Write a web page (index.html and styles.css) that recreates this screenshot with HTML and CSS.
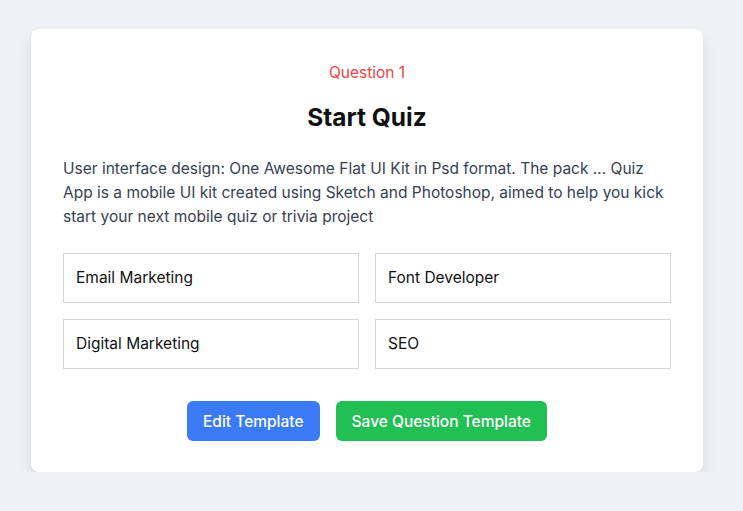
FILE: index.html
```html
<!DOCTYPE html>
<html>
<head>
<meta charset="utf-8">
<link rel="stylesheet" href="styles.css">
</head>
<body>
<div class="card">
  <div class="label">Question 1</div>
  <h1 class="title">Start Quiz</h1>
  <p class="desc">User interface design: One Awesome Flat UI Kit in Psd format. The pack … Quiz App is a mobile UI kit created using Sketch and Photoshop, aimed to help you kick start your next mobile quiz or trivia project</p>
  <div class="options">
    <div class="option">Email Marketing</div>
    <div class="option">Font Developer</div>
    <div class="option">Digital Marketing</div>
    <div class="option">SEO</div>
  </div>
  <div class="actions">
    <button class="btn btn-blue">Edit Template</button>
    <button class="btn btn-green">Save Question Template</button>
  </div>
</div>
</body>
</html>
```

FILE: styles.css
```css
html, body {
  margin: 0;
  background: #f0f1f5;
}
body {
  padding: 29px 0 0 31px;
  font-family: Inter, "Noto Sans", sans-serif;
  color: #111827;
}
.card {
  width: 672px;
  box-sizing: border-box;
  background: #fff;
  border-radius: 8px;
  padding: 32px 32px 31px;
  box-shadow: 0 8px 16px rgba(0,0,0,0.08), 0 1px 3px rgba(0,0,0,0.05);
}
.label {
  text-align: center;
  color: #ef4444;
  font-size: 15.5px;
  line-height: 24px;
}
.title {
  margin: 16px 0 0;
  text-align: center;
  font-size: 24.5px;
  line-height: 32px;
  font-weight: 700;
  color: #111;
}
.desc {
  margin: 24px 0 0;
  font-size: 15.5px;
  line-height: 24px;
  color: #374151;
}
.options {
  margin-top: 24px;
  display: grid;
  grid-template-columns: 1fr 1fr;
  gap: 16px;
}
.option {
  height: 50px;
  box-sizing: border-box;
  border: 1px solid #d1d5db;
  padding: 0 12px 1px;
  display: flex;
  align-items: center;
  font-size: 15.5px;
  color: #111;
}
.actions {
  margin-top: 32px;
  display: flex;
  justify-content: center;
  gap: 16px;
}
.btn {
  height: 40px;
  border: none;
  border-radius: 6px;
  padding: 0 16px;
  font-family: inherit;
  font-size: 15.5px;
  font-weight: 500;
  color: #fff;
}
.btn-blue { background: #3b7af5; }
.btn-green { background: #22bf55; }
```
